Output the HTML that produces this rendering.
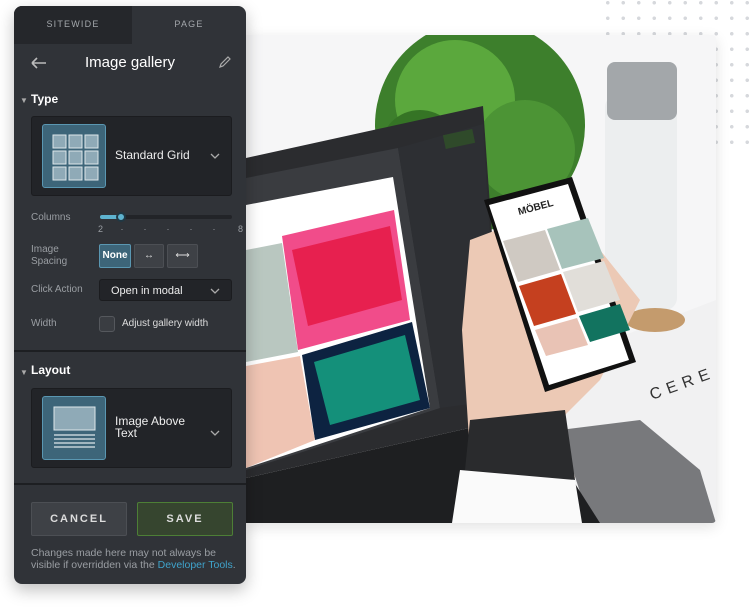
<!DOCTYPE html>
<html><head><meta charset="utf-8"><style>
*{margin:0;padding:0;box-sizing:border-box}
body{width:750px;height:607px;background:#fff;position:relative;overflow:hidden;font-family:"Liberation Sans",sans-serif}
.a{position:absolute}
.panel{left:14px;top:6px;width:232px;height:578px;background:#303338;border-radius:8px;overflow:hidden;box-shadow:0 6px 16px rgba(0,0,0,.25);z-index:5}
.lbl{color:#9a9ea3;font-size:10px}
.card{background:#222428;border:1px solid #1b1c1f;border-radius:3px}
.ico{background:#3d6579;border:1px solid #5a97b2;border-radius:3px}
.btn{background:#3e4146;border:1px solid #4c4f54;border-radius:2px;color:#ddd;font-size:10px;text-align:center}
</style></head><body>
<div class="a" style="left:600px;top:0;width:150px;height:150px;background-image:radial-gradient(circle,#d6d8dc 1.6px,transparent 2px);background-size:15.5px 15.5px;background-position:0 -5px"></div>
<div class="a" style="left:246px;top:35px;width:470px;height:488px;background:#f7f7f8;overflow:hidden;box-shadow:0 4px 14px rgba(0,0,0,.12);border-radius:0 4px 4px 0">
<svg width="470" height="488" viewBox="246 35 470 488">
<rect x="246" y="35" width="470" height="488" fill="#f6f6f7"/>
<polygon points="560,360 716,300 716,523 560,523" fill="#f1f1f2"/>
<text x="652" y="400" font-size="16" fill="#333" letter-spacing="6" transform="rotate(-20 652 400)" font-family="Liberation Sans">CERE</text>
<polygon points="560,430 640,420 700,470 716,523 590,523" fill="#78797c"/>
<circle cx="480" cy="125" r="105" fill="#3d7f2c"/>
<circle cx="455" cy="100" r="60" fill="#5ba83d"/>
<circle cx="525" cy="150" r="50" fill="#4c9435"/>
<circle cx="420" cy="150" r="40" fill="#357425"/>
<rect x="605" y="95" width="72" height="215" rx="12" fill="#eceeef"/>
<rect x="607" y="62" width="70" height="58" rx="8" fill="#a3a7aa"/>
<ellipse cx="655" cy="320" rx="30" ry="12" fill="#c49b6d"/>
<polygon points="246,158 483,106 505,420 246,478" fill="#2b2c2f"/>
<polygon points="246,478 505,420 560,460 600,523 246,523" fill="#1e1f21"/>
<polygon points="246,178 398,148 440,408 246,470" fill="#3a3c40"/>
<polygon points="246,205 393,177 430,408 246,468" fill="#fff"/>
<polygon points="282,236 394,210 410,320 298,350" fill="#f14c8a"/>
<polygon points="292,250 390,226 402,300 308,326" fill="#e7204f"/>
<polygon points="246,250 282,243 298,352 246,362" fill="#b9c7c0"/>
<polygon points="302,355 412,322 430,408 315,440" fill="#0d2341"/>
<polygon points="314,362 405,335 420,400 330,425" fill="#14907a"/>
<polygon points="246,366 300,356 315,440 246,468" fill="#efc4b3"/>
<polygon points="398,148 483,124 500,400 440,408" fill="#2d2f33"/>
<rect x="444" y="132" width="30" height="14" fill="#2f4a2a" transform="rotate(-12 459 139)"/>
<polygon points="470,240 510,225 600,250 640,300 600,380 560,420 575,478 470,455 462,330" fill="#ecc9b5"/>
<polygon points="470,420 565,410 575,480 465,470" fill="#2a2b2d"/>
<polygon points="460,470 575,480 582,523 452,523" fill="#fafafa"/>
<polygon points="484,200 572,177 636,362 545,392" fill="#111"/>
<polygon points="489,205 568,184 629,360 549,385" fill="#fff"/>
<polygon points="503,241 545,230 560,270 518,282" fill="#cfc9c2"/>
<polygon points="547,229 588,218 604,258 562,269" fill="#a7c3bb"/>
<polygon points="519,286 561,274 576,314 534,326" fill="#c5401f"/>
<polygon points="563,272 604,261 620,300 578,312" fill="#e1ded9"/>
<polygon points="535,330 577,318 588,345 546,356" fill="#e9c3b5"/>
<polygon points="579,316 620,304 630,330 590,342" fill="#12735f"/>
<text x="519" y="215" font-size="10" font-weight="bold" fill="#222" transform="rotate(-15 519 215)">MÖBEL</text>
</svg></div>

<div class="a panel">
 <div class="a" style="left:0;top:0;width:118px;height:38px;background:#25272b;color:#a3a7ab;font-size:9px;letter-spacing:1.2px;text-align:center;line-height:36px">SITEWIDE</div>
 <div class="a" style="left:118px;top:0;width:114px;height:38px;color:#a3a7ab;font-size:9px;letter-spacing:1.2px;text-align:center;line-height:36px">PAGE</div>
 <svg class="a" style="left:16px;top:50px" width="18" height="14"><path d="M2 7H16M2 7L7 2M2 7L7 12" stroke="#bbb" stroke-width="1.6" fill="none"/></svg>
 <div class="a" style="left:0;width:232px;top:48px;text-align:center;color:#fff;font-size:15px">Image gallery</div>
 <svg class="a" style="left:204px;top:49px" width="14" height="14"><path d="M2 12L3 9L10 2L12 4L5 11Z" stroke="#aaa" stroke-width="1.2" fill="none"/></svg>
 <div class="a" style="left:6px;top:90px;color:#aaa;font-size:8px">▼</div>
 <div class="a" style="left:17px;top:86px;color:#fff;font-size:12px;font-weight:bold">Type</div>
 <div class="a card" style="left:17px;top:110px;width:201px;height:80px"></div>
 <div class="a ico" style="left:28px;top:118px;width:64px;height:64px">
  <svg width="64" height="64"><g fill="#8faab7" stroke="#dde6ea" stroke-width="1">
  <rect x="10" y="10" width="13" height="13"/><rect x="26" y="10" width="13" height="13"/><rect x="42" y="10" width="13" height="13"/>
  <rect x="10" y="26" width="13" height="13"/><rect x="26" y="26" width="13" height="13"/><rect x="42" y="26" width="13" height="13"/>
  <rect x="10" y="42" width="13" height="13"/><rect x="26" y="42" width="13" height="13"/><rect x="42" y="42" width="13" height="13"/></g></svg>
 </div>
 <div class="a" style="left:101px;top:142px;color:#eee;font-size:12px">Standard Grid</div>
 <svg class="a" style="left:196px;top:146px" width="10" height="8"><path d="M1 2L5 6L9 2" stroke="#aaa" stroke-width="1.3" fill="none"/></svg>
 <div class="a lbl" style="left:17px;top:206px">Columns</div>
 <div class="a" style="left:86px;top:209px;width:132px;height:4px;background:#222428;border-radius:2px"></div>
 <div class="a" style="left:86px;top:209px;width:22px;height:4px;background:#5eb3cf;border-radius:2px"></div>
 <div class="a" style="left:102px;top:206px;width:10px;height:10px;border-radius:50%;background:#5eb3cf;border:2px solid #203844"></div>
 <div class="a lbl" style="left:84px;top:218px;font-size:9px;width:152px;letter-spacing:0">2&nbsp;&nbsp;&nbsp;&nbsp;&nbsp;&nbsp;&nbsp;·&nbsp;&nbsp;&nbsp;&nbsp;&nbsp;&nbsp;&nbsp;&nbsp;·&nbsp;&nbsp;&nbsp;&nbsp;&nbsp;&nbsp;&nbsp;&nbsp;·&nbsp;&nbsp;&nbsp;&nbsp;&nbsp;&nbsp;&nbsp;&nbsp;·&nbsp;&nbsp;&nbsp;&nbsp;&nbsp;&nbsp;&nbsp;&nbsp;·&nbsp;&nbsp;&nbsp;&nbsp;&nbsp;&nbsp;&nbsp;&nbsp;&nbsp;8</div>
 <div class="a lbl" style="left:17px;top:238px;line-height:12px">Image<br>Spacing</div>
 <div class="a btn" style="left:85px;top:238px;width:32px;height:24px;background:#3d6579;border-color:#5a97b2;color:#fff;font-weight:bold;line-height:22px">None</div>
 <div class="a btn" style="left:120px;top:238px;width:30px;height:24px;line-height:21px">↔</div>
 <div class="a btn" style="left:153px;top:238px;width:31px;height:24px;line-height:21px">⟷</div>
 <div class="a lbl" style="left:17px;top:278px">Click Action</div>
 <div class="a card" style="left:85px;top:273px;width:133px;height:22px;color:#eee;font-size:11px;padding:5px 0 0 11px">Open in modal</div>
 <svg class="a" style="left:196px;top:281px" width="10" height="8"><path d="M1 2L5 6L9 2" stroke="#aaa" stroke-width="1.3" fill="none"/></svg>
 <div class="a lbl" style="left:17px;top:312px">Width</div>
 <div class="a" style="left:85px;top:310px;width:16px;height:16px;border:1px solid #55585d;background:#3a3d42;border-radius:3px"></div>
 <div class="a" style="left:108px;top:312px;color:#ddd;font-size:10px">Adjust gallery width</div>
 <div class="a" style="left:0;top:344px;width:232px;height:2px;background:#1d1f22"></div>
 <div class="a" style="left:6px;top:362px;color:#aaa;font-size:8px">▼</div>
 <div class="a" style="left:17px;top:357px;color:#fff;font-size:12px;font-weight:bold">Layout</div>
 <div class="a card" style="left:17px;top:382px;width:201px;height:80px"></div>
 <div class="a ico" style="left:28px;top:390px;width:64px;height:64px">
  <svg width="64" height="64"><rect x="11" y="10" width="41" height="23" fill="#8faab7" stroke="#dde6ea"/><g stroke="#dde6ea" stroke-width="1.2"><line x1="11" y1="38" x2="52" y2="38"/><line x1="11" y1="42" x2="52" y2="42"/><line x1="11" y1="46" x2="52" y2="46"/><line x1="11" y1="50" x2="52" y2="50"/></g></svg>
 </div>
 <div class="a" style="left:101px;top:409px;color:#eee;font-size:12px;line-height:12px">Image Above<br>Text</div>
 <svg class="a" style="left:196px;top:423px" width="10" height="8"><path d="M1 2L5 6L9 2" stroke="#aaa" stroke-width="1.3" fill="none"/></svg>
 <div class="a" style="left:0;top:477px;width:232px;height:2px;background:#1d1f22"></div>
 <div class="a btn" style="left:17px;top:496px;width:96px;height:34px;line-height:32px;font-weight:bold;letter-spacing:2px;font-size:11px">CANCEL</div>
 <div class="a btn" style="left:123px;top:496px;width:96px;height:34px;line-height:32px;font-weight:bold;letter-spacing:2px;font-size:11px;background:#36452f;border-color:#4d7f36">SAVE</div>
 <div class="a lbl" style="left:17px;top:541px;line-height:12px;white-space:nowrap;font-size:10.5px">Changes made here may not always be<br>visible if overridden via the <span style="color:#3fa3cb">Developer Tools</span>.</div>
</div>
</body></html>
